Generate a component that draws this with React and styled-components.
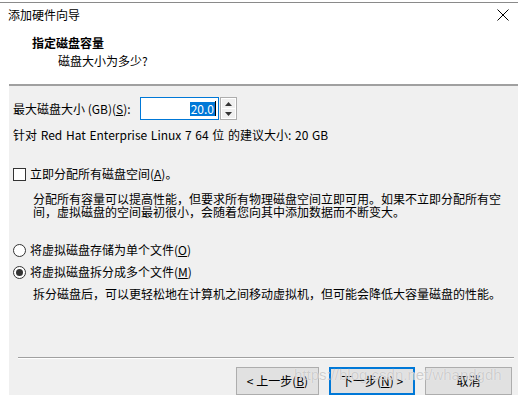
import React from "react";
import styled, { createGlobalStyle } from "styled-components";

const GlobalStyle = createGlobalStyle`
  html, body { margin: 0; padding: 0; background: #fff; }
  body {
    font-family: "Noto Sans CJK SC", "Microsoft YaHei", sans-serif;
    font-size: 12px;
    color: #000;
  }
`;

const Window = styled.div`
  position: relative;
  width: 522px;
  height: 395px;
  overflow: hidden;
  background: #fff;
  display: flex;
  flex-direction: column;
`;

const BehindStrip = styled.div`
  height: 2px;
  margin-right: 4px;
  border-bottom: 1px solid #8a8a8a;
  flex: none;
`;

const TitleBar = styled.div`
  flex: none;
  height: 24px;
  padding: 0 13px 0 8px;
  display: flex;
  align-items: center;
  justify-content: space-between;
  line-height: 14px;
`;

const Header = styled.div`
  flex: none;
  height: 57px;
  box-sizing: border-box;
  padding: 9px 0 0 32px;
  display: flex;
  flex-direction: column;
  gap: 4px;
  line-height: 14px;
`;

const HeaderTitle = styled.div`
  font-weight: bold;
`;

const HeaderSub = styled.div`
  padding-left: 26px;
`;

const Etched = styled.div`
  flex: none;
  height: 1px;
  background: #a0a0a0;
  margin: 0 4px 0 9px;
  border-bottom: 1px solid ${(p) => (p.$light ? "#fff" : "transparent")};
`;

const Body = styled.div`
  flex: 1;
  margin: 0 4px 0 9px;
  background: #f0f0f0;
  display: flex;
  flex-direction: column;
`;

const Content = styled.div`
  flex: 1;
  padding: 11px 0 0 4px;
  line-height: 14px;
`;

const SizeRow = styled.div`
  display: flex;
  align-items: center;
  height: 23px;
  gap: 5px;
`;

const SizeLabel = styled.span`
  width: 122px;
  white-space: nowrap;
`;

const SpinInput = styled.div`
  display: flex;
  align-items: stretch;
  height: 23px;
  gap: 1px;
`;

const InputBox = styled.div`
  width: 79px;
  box-sizing: border-box;
  border: 1px solid #0078d7;
  background: #fff;
  display: flex;
  align-items: center;
  justify-content: flex-end;
  padding-right: 2px;
`;

const Selected = styled.span`
  background: #0078d7;
  color: #fff;
  padding: 0 1px;
  line-height: 14px;
`;

const Caret = styled.span`
  width: 1px;
  height: 15px;
  background: #000;
`;

const Spinner = styled.div`
  width: 17px;
  box-sizing: border-box;
  border: 1px solid #adadad;
  display: flex;
  flex-direction: column;
  gap: 1px;
  padding: 1px;
  background: #fff;
`;

const SpinHalf = styled.div`
  flex: 1;
  background: #f0f0f0;
  display: flex;
  align-items: center;
  justify-content: center;
`;

const Hint = styled.div`
  margin-top: 8px;
  word-spacing: 1px;
`;

const OptionRow = styled.div`
  display: flex;
  align-items: center;
  gap: 4px;
  margin-top: ${(p) => p.$top}px;
`;

const CheckBox = styled.span`
  width: 13px;
  height: 13px;
  box-sizing: border-box;
  border: 1px solid #333;
  background: #fff;
`;

const Radio = styled.span`
  width: 13px;
  height: 13px;
  box-sizing: border-box;
  border: 1px solid #333;
  border-radius: 50%;
  background: #fff;
  display: flex;
  align-items: center;
  justify-content: center;
  &::after {
    content: "";
    width: 7px;
    height: 7px;
    border-radius: 50%;
    background: ${(p) => (p.$checked ? "#333" : "transparent")};
  }
`;

const Desc = styled.div`
  margin-top: ${(p) => p.$top}px;
  padding-left: 20px;
  width: 472px;
  line-height: 13px;
`;

const Key = styled.span`
  text-decoration: underline;
`;

const Footer = styled.div`
  flex: none;
  height: 28px;
  padding: 8px 6px 0 0;
  display: flex;
  justify-content: flex-end;
  gap: 10px;
`;

const Button = styled.div`
  width: ${(p) => p.$w}px;
  height: 28px;
  box-sizing: border-box;
  background: #e1e1e1;
  border: ${(p) => (p.$default ? "2px solid #0078d7" : "1px solid #adadad")};
  display: flex;
  justify-content: center;
  padding-top: ${(p) => (p.$default ? 5 : 6)}px;
  line-height: 14px;
`;

const Watermark = styled.div`
  position: absolute;
  left: 294px;
  top: 366px;
  font-family: "Liberation Sans", Arial, sans-serif;
  font-size: 15px;
  line-height: 17px;
  color: rgba(190, 190, 190, 0.75);
  text-shadow: 0 0 1px #fff;
  pointer-events: none;
`;

function CloseIcon() {
  return (
    <svg width="12" height="12" viewBox="0 0 12 12">
      <path d="M0.5 0.5 L11.5 11.5 M11.5 0.5 L0.5 11.5" stroke="#000" strokeWidth="1" />
    </svg>
  );
}

function Arrow({ up }) {
  return (
    <svg width="7" height="4" viewBox="0 0 7 4">
      <path d={up ? "M0 4 L3.5 0 L7 4 Z" : "M0 0 L3.5 4 L7 0 Z"} fill="#333" />
    </svg>
  );
}

export default function App() {
  return (
    <>
      <GlobalStyle />
      <Window>
        <BehindStrip />
        <TitleBar>
          <span>添加硬件向导</span>
          <CloseIcon />
        </TitleBar>
        <Header>
          <HeaderTitle>指定磁盘容量</HeaderTitle>
          <HeaderSub>磁盘大小为多少?</HeaderSub>
        </Header>
        <Etched />
        <Body>
          <Content>
            <SizeRow>
              <SizeLabel>
                最大磁盘大小 (GB)(<Key>S</Key>):
              </SizeLabel>
              <SpinInput>
                <InputBox>
                  <Selected>20.0</Selected>
                  <Caret />
                </InputBox>
                <Spinner>
                  <SpinHalf>
                    <Arrow up />
                  </SpinHalf>
                  <SpinHalf>
                    <Arrow />
                  </SpinHalf>
                </Spinner>
              </SpinInput>
            </SizeRow>
            <Hint>针对 Red Hat Enterprise Linux 7 64 位 的建议大小: 20 GB</Hint>
            <OptionRow $top={25}>
              <CheckBox />
              <span>
                立即分配所有磁盘空间(<Key>A</Key>)。
              </span>
            </OptionRow>
            <Desc $top={11}>
              分配所有容量可以提高性能，但要求所有物理磁盘空间立即可用。如果不立即分配所有空间，虚拟磁盘的空间最初很小，会随着您向其中添加数据而不断变大。
            </Desc>
            <OptionRow $top={25}>
              <Radio />
              <span>
                将虚拟磁盘存储为单个文件(<Key>O</Key>)
              </span>
            </OptionRow>
            <OptionRow $top={8}>
              <Radio $checked />
              <span>
                将虚拟磁盘拆分成多个文件(<Key>M</Key>)
              </span>
            </OptionRow>
            <Desc $top={8}>
              拆分磁盘后，可以更轻松地在计算机之间移动虚拟机，但可能会降低大容量磁盘的性能。
            </Desc>
          </Content>
          <Etched $light />
          <Footer>
            <Button $w={83}>
              &lt; 上一步(<Key>B</Key>)
            </Button>
            <Button $w={86} $default>
              下一步(<Key>N</Key>) &gt;
            </Button>
            <Button $w={87}>取消</Button>
          </Footer>
        </Body>
        <Watermark>https://blog.csdn.net/whandgdh</Watermark>
      </Window>
    </>
  );
}
